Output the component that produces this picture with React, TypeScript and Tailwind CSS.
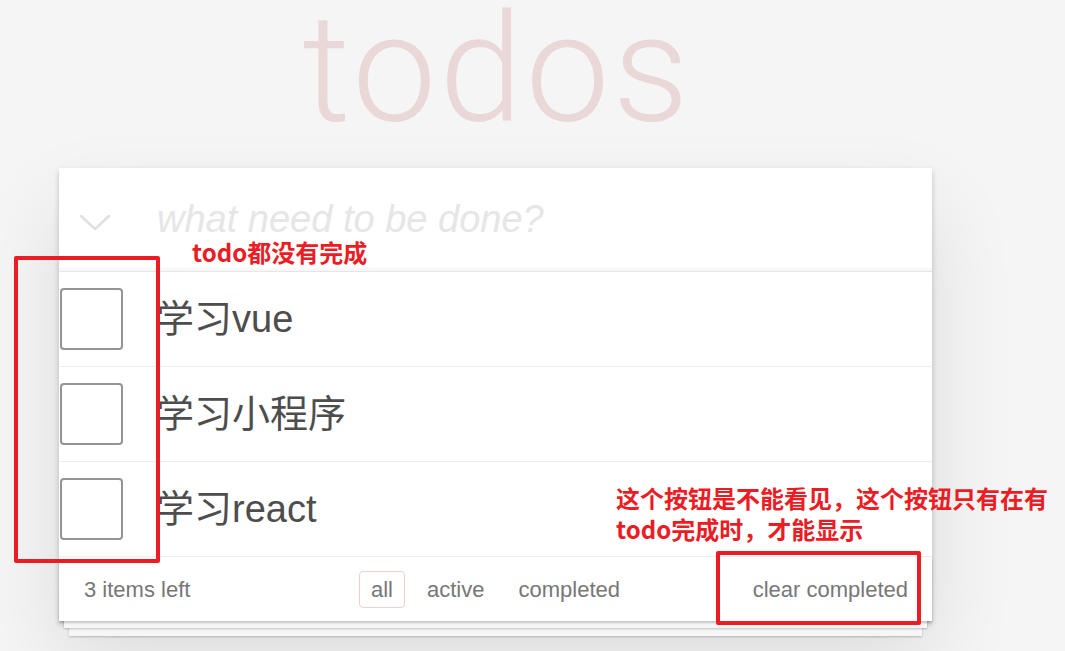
const todos = ["学习vue", "学习小程序", "学习react"];

function Chevron() {
  return (
    <svg width="32" height="18" viewBox="0 0 32 18" fill="none">
      <polyline points="2,2 16,15 30,2" stroke="#e0e0e0" strokeWidth="2.5" strokeLinecap="round" strokeLinejoin="round" />
    </svg>
  );
}

function TodoRow({ title }: { title: string }) {
  return (
    <li className="flex h-[95px] items-center border-b border-[#ededed]">
      <div className="ml-px h-[62px] w-[63px] rounded-[4px] border-2 border-[#949494] bg-white"></div>
      <span className="ml-[33px] text-[38px] leading-none text-[#4d4d4d]">{title}</span>
    </li>
  );
}

export default function App() {
  return (
    <div
      className="relative h-[651px] w-[1065px] overflow-hidden bg-[#f5f5f5]"
      style={{ fontFamily: '"Liberation Sans", "Noto Sans CJK SC", Arial, sans-serif' }}
    >
      <div className="ml-[59px] w-[873px]">
        <h1
          className="h-[140px] pl-[3px] text-center text-[150px] leading-[140px] font-light text-[#ead7d7] tracking-[3px]"
          style={{ fontFamily: 'Roboto, "Liberation Sans", sans-serif' }}
        >
          todos
        </h1>

        <section className="relative mt-[28px] bg-white shadow-[0_3px_6px_rgba(0,0,0,0.2),0_40px_80px_rgba(0,0,0,0.1)]">
          <header className="flex h-[104px] items-center border-b border-[#e6e6e6] shadow-[inset_0_-3px_2px_rgba(0,0,0,0.03)]">
            <div className="ml-[20px] mt-[6px] flex w-[78px]">
              <Chevron />
            </div>
            <span className="text-[38px] italic text-[#e6e6e6]">what need to be done?</span>
          </header>

          <ul>
            {todos.map((t) => (
              <TodoRow key={t} title={t} />
            ))}
          </ul>

          <footer className="relative grid h-[64px] grid-cols-[1fr_auto_1fr] items-center text-[22px] leading-[27px] text-[#777] shadow-[0_2px_2px_rgba(0,0,0,0.2),0_12px_0_-5px_#f6f6f6,0_13px_2px_-5px_rgba(0,0,0,0.22),0_25px_0_-10px_#f6f6f6,0_26px_2px_-10px_rgba(0,0,0,0.22)]">
            <span className="pl-[25px]">3 items left</span>
            <div className="flex items-center">
              <a className="mx-[5px] rounded-[4px] border border-[#efd0d0] px-[11px] py-[4px]">all</a>
              <a className="mx-[5px] border border-transparent px-[11px] py-[4px]">active</a>
              <a className="mx-[5px] border border-transparent px-[11px] py-[4px]">completed</a>
            </div>
            <span className="pr-[24px] text-right">clear completed</span>
          </footer>
        </section>
      </div>

      {/* annotations drawn over the screenshot */}
      <div className="absolute left-[14px] top-[256px] h-[307px] w-[146px] rounded-[2px] border-[4px] border-[#ec1c24]"></div>
      <div className="absolute left-[716px] top-[551px] h-[74px] w-[205px] rounded-[2px] border-[4px] border-[#ec1c24]"></div>
      <p
        className="absolute left-[192px] top-[237px] text-[24px] leading-[30px] font-bold text-[#ec1c24]"
        style={{ fontFamily: '"Noto Sans CJK SC", sans-serif' }}
      >
        todo都没有完成
      </p>
      <p
        className="absolute left-[616px] top-[482px] w-[440px] text-[24px] leading-[31px] font-bold text-[#ec1c24]"
        style={{ fontFamily: '"Noto Sans CJK SC", sans-serif' }}
      >
        这个按钮是不能看见，这个按钮只有在有
        <br />
        todo完成时，才能显示
      </p>
    </div>
  );
}
